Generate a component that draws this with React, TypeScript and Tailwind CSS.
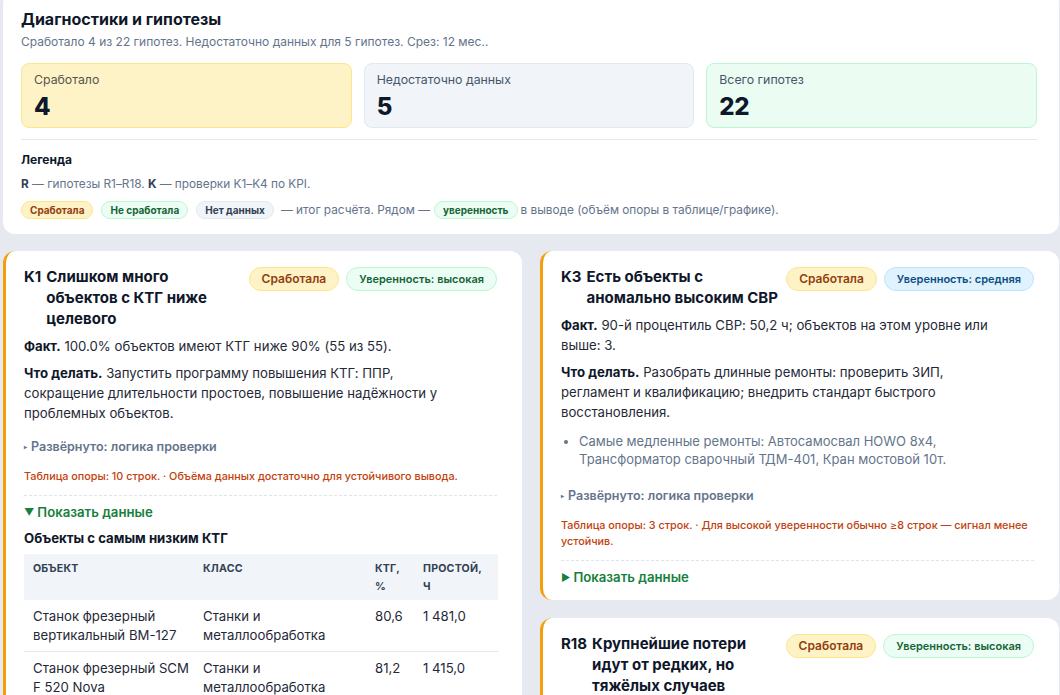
import React from "react";

function StatusBadge({ small = false }: { small?: boolean }) {
  return (
    <span
      className={
        small
          ? "inline-flex h-[18px] items-center rounded-full border border-[#fde68a] bg-[#fef3c7] px-[8px] text-[10px] font-bold text-[#92400e]"
          : "inline-flex h-[24px] items-center whitespace-nowrap rounded-full border border-[#fde68a] bg-[#fef3c7] px-[12px] text-[12px] font-semibold text-[#92400e]"
      }
    >
      Сработала
    </span>
  );
}

function ConfBadge({ level, tone }: { level: string; tone: "green" | "blue" }) {
  const cls =
    tone === "green"
      ? "border-[#bbf7d0] bg-[#ecfdf5] text-[#166534]"
      : "border-[#bae6fd] bg-[#e0f2fe] text-[#0b4f85]";
  return (
    <span
      className={
        "inline-flex h-[24px] items-center whitespace-nowrap rounded-full border px-[12px] text-[11px] font-semibold " +
        cls
      }
    >
      Уверенность: {level}
    </span>
  );
}

function Card({
  code,
  title,
  conf,
  tone,
  children,
}: {
  code: string;
  title: string[];
  conf: string;
  tone: "green" | "blue";
  children?: React.ReactNode;
}) {
  return (
    <div className="rounded-[12px] border-l-[3px] border-[#f59e0b] bg-white pb-[14px] pl-[18px] pr-[25px] pt-[15px]">
      <div className="flex items-start gap-[8px]">
        <div className="flex min-w-0 flex-1 gap-[5px] text-[15px] font-bold leading-[21px] text-[#0f172a]">
          <span className="shrink-0">{code}</span>
          <span className="flex flex-col">
            {title.map((t, i) => (
              <span key={i} className="whitespace-nowrap">
                {t}
              </span>
            ))}
          </span>
        </div>
        <div className="mt-[1px] flex shrink-0 gap-[7px]">
          <StatusBadge />
          <ConfBadge level={conf} tone={tone} />
        </div>
      </div>
      {children}
    </div>
  );
}

function P({ label, children }: { label: string; children: React.ReactNode }) {
  return (
    <p className="mt-[7px] max-w-[447px] text-[13.2px] leading-[20px] text-[#1f2937]">
      <b className="font-bold text-[#0f172a]">{label}</b> {children}
    </p>
  );
}

function Expanded({ mt }: { mt: string }) {
  return (
    <div className={"flex items-center gap-[4px] text-[12.5px] font-semibold leading-[16px] text-[#64748b] " + mt}>
      <span className="text-[6px]">▸</span>
      <span>Развёрнуто: логика проверки</span>
    </div>
  );
}

function Support({ children }: { children: React.ReactNode }) {
  return (
    <p className="mt-[14px] border-b border-dashed border-[#dfe4ea] pb-[10px] text-[10.8px] font-medium leading-[16px] text-[#c2410c]">
      {children}
    </p>
  );
}

function ShowData({ open }: { open: boolean }) {
  return (
    <div className="mt-[7px] flex items-center gap-[3px] text-[13.2px] font-semibold leading-[18px] text-[#16803c]">
      <span className="text-[10px]">{open ? "▼" : "▶"}</span>
      <span>Показать данные</span>
    </div>
  );
}

const rows = [
  ["Станок фрезерный вертикальный ВМ-127", "Станки и металлообработка", "80,6", "1 481,0"],
  ["Станок фрезерный SCM F 520 Nova", "Станки и металлообработка", "81,2", "1 415,0"],
  ["Станок токарный 16К20", "Станки и металлообработка", "82,4", "1 380,0"],
];

export default function App() {
  return (
    <div className="h-[695px] w-[1060px] overflow-hidden bg-[#e6eaf0] pl-[3px] pr-[1px] font-['Inter',sans-serif] text-[#0f172a] [font-feature-settings:'calt'_0]">
      {/* Summary card */}
      <div className="-mt-[8px] rounded-[12px] bg-white pb-[15px] pl-[18px] pr-[22px] pt-[15px]">
        <h1 className="text-[16px] font-bold leading-[24px] text-[#0f172a]">Диагностики и гипотезы</h1>
        <p className="mt-[2px] text-[12px] leading-[18px] text-[#64748b]">
          Сработало 4 из 22 гипотез. Недостаточно данных для 5 гипотез. Срез: 12 мес..
        </p>
        <div className="mt-[12px] grid grid-cols-3 gap-[12px]">
          <div className="rounded-[8px] border border-[#fde68a] bg-[#fef3c7] pb-[6px] pl-[12px] pt-[8px]">
            <div className="text-[12.3px] leading-[16px] text-[#57534e]">Сработало</div>
            <div className="mt-[5px] text-[24px] font-extrabold leading-[28px] text-[#0f172a]">4</div>
          </div>
          <div className="rounded-[8px] border border-[#e2e8f0] bg-[#f1f5f9] pb-[6px] pl-[12px] pt-[8px]">
            <div className="text-[12.3px] leading-[16px] text-[#475569]">Недостаточно данных</div>
            <div className="mt-[5px] text-[24px] font-extrabold leading-[28px] text-[#0f172a]">5</div>
          </div>
          <div className="rounded-[8px] border border-[#bbf7d0] bg-[#ebfcf2] pb-[6px] pl-[12px] pt-[8px]">
            <div className="text-[12.3px] leading-[16px] text-[#475569]">Всего гипотез</div>
            <div className="mt-[5px] text-[24px] font-extrabold leading-[28px] tracking-[-0.02em] text-[#0f172a]">22</div>
          </div>
        </div>
        <div className="mt-[11px] border-t border-[#e2e8f0] pt-[12px]">
          <div className="text-[12px] font-bold leading-[16px] text-[#0f172a]">Легенда</div>
          <p className="mt-[8px] text-[11.8px] leading-[16px] text-[#64748b]">
            <b className="font-bold text-[#334155]">R</b> — гипотезы R1–R18. <b className="font-bold text-[#334155]">K</b> — проверки K1–K4 по KPI.
          </p>
          <div className="mt-[9px] flex items-center text-[11.8px] leading-[16px] text-[#64748b]">
            <StatusBadge small />
            <span className="ml-[8px] inline-flex h-[18px] items-center rounded-full border border-[#bbf7d0] bg-[#ecfdf5] px-[8px] text-[10px] font-bold text-[#166534]">
              Не сработала
            </span>
            <span className="ml-[8px] inline-flex h-[18px] items-center rounded-full border border-[#e2e8f0] bg-[#f1f5f9] px-[8px] text-[10px] font-bold text-[#334155]">
              Нет данных
            </span>
            <span className="ml-[7px]">— итог расчёта. Рядом —</span>
            <span className="ml-[4px] inline-flex h-[18px] items-center rounded-full border border-[#bbf7d0] bg-[#ecfdf5] px-[8px] text-[10px] font-bold text-[#166534]">
              уверенность
            </span>
            <span className="ml-[3px]">в выводе (объём опоры в таблице/графике).</span>
          </div>
        </div>
      </div>

      {/* Cards */}
      <div className="mt-[17px] grid grid-cols-2 items-start gap-x-[18px]">
        <div className="flex flex-col gap-[18px]">
          <Card code="K1" title={["Слишком много", "объектов с КТГ ниже", "целевого"]} conf="высокая" tone="green">
            <P label="Факт.">100.0% объектов имеют КТГ ниже 90% (55 из 55).</P>
            <P label="Что делать.">
              Запустить программу повышения КТГ: ППР, сокращение длительности простоев, повышение надёжности у
              проблемных объектов.
            </P>
            <Expanded mt="mt-[16px]" />
            <Support>Таблица опоры: 10 строк. · Объёма данных достаточно для устойчивого вывода.</Support>
            <ShowData open />
            <div className="mt-[8px] text-[13.2px] font-bold leading-[18px] text-[#0f172a]">Объекты с самым низким КТГ</div>
            <table className="mt-[7px] w-full table-fixed border-collapse text-left">
              <colgroup>
                <col className="w-[171px]" />
                <col className="w-[171px]" />
                <col className="w-[48px]" />
                <col className="w-[84px]" />
              </colgroup>
              <thead>
                <tr className="bg-[#f1f5f9] text-[10.6px] font-bold uppercase leading-[18px] tracking-[0.02em] text-[#334155]">
                  <th className="pb-[4px] pl-[9px] pr-[4px] pt-[6px] align-top font-bold">Объект</th>
                  <th className="px-[8px] pb-[4px] pt-[6px] align-top font-bold">Класс</th>
                  <th className="px-[9px] pb-[4px] pt-[6px] align-top font-bold">КТГ, %</th>
                  <th className="px-[9px] pb-[4px] pt-[6px] align-top font-bold">Простой, ч</th>
                </tr>
              </thead>
              <tbody>
                {rows.map((r, i) => (
                  <tr key={i} className="border-b border-[#e2e8f0] text-[13.2px] leading-[19px] text-[#1f2937]">
                    <td className="pb-[6px] pl-[9px] pr-[4px] pt-[7px] align-top">{r[0]}</td>
                    <td className="px-[8px] pb-[6px] pt-[7px] align-top">{r[1]}</td>
                    <td className="px-[9px] pb-[6px] pt-[7px] align-top">{r[2]}</td>
                    <td className="px-[9px] pb-[6px] pt-[7px] align-top">{r[3]}</td>
                  </tr>
                ))}
              </tbody>
            </table>
          </Card>
        </div>
        <div className="flex flex-col gap-[18px]">
          <Card code="K3" title={["Есть объекты с", "аномально высоким СВР"]} conf="средняя" tone="blue">
            <P label="Факт.">90-й процентиль СВР: 50,2 ч; объектов на этом уровне или выше: 3.</P>
            <P label="Что делать.">
              Разобрать длинные ремонты: проверить ЗИП, регламент и квалификацию; внедрить стандарт быстрого
              восстановления.
            </P>
            <ul className="mt-[10px] max-w-[447px] list-disc pl-[18px] text-[13px] leading-[18px] text-[#64748b] marker:text-[#64748b]">
              <li>Самые медленные ремонты: Автосамосвал HOWO 8x4, Трансформатор сварочный ТДМ-401, Кран мостовой 10т.</li>
            </ul>
            <Expanded mt="mt-[20px]" />
            <Support>
              Таблица опоры: 3 строк. · Для высокой уверенности обычно ≥8 строк — сигнал менее устойчив.
            </Support>
            <ShowData open={false} />
          </Card>
          <Card code="R18" title={["Крупнейшие потери", "идут от редких, но", "тяжёлых случаев"]} conf="высокая" tone="green">
            <P label="Факт.">Топ-10% случаев дают 48% всех потерь времени.</P>
          </Card>
        </div>
      </div>
    </div>
  );
}
